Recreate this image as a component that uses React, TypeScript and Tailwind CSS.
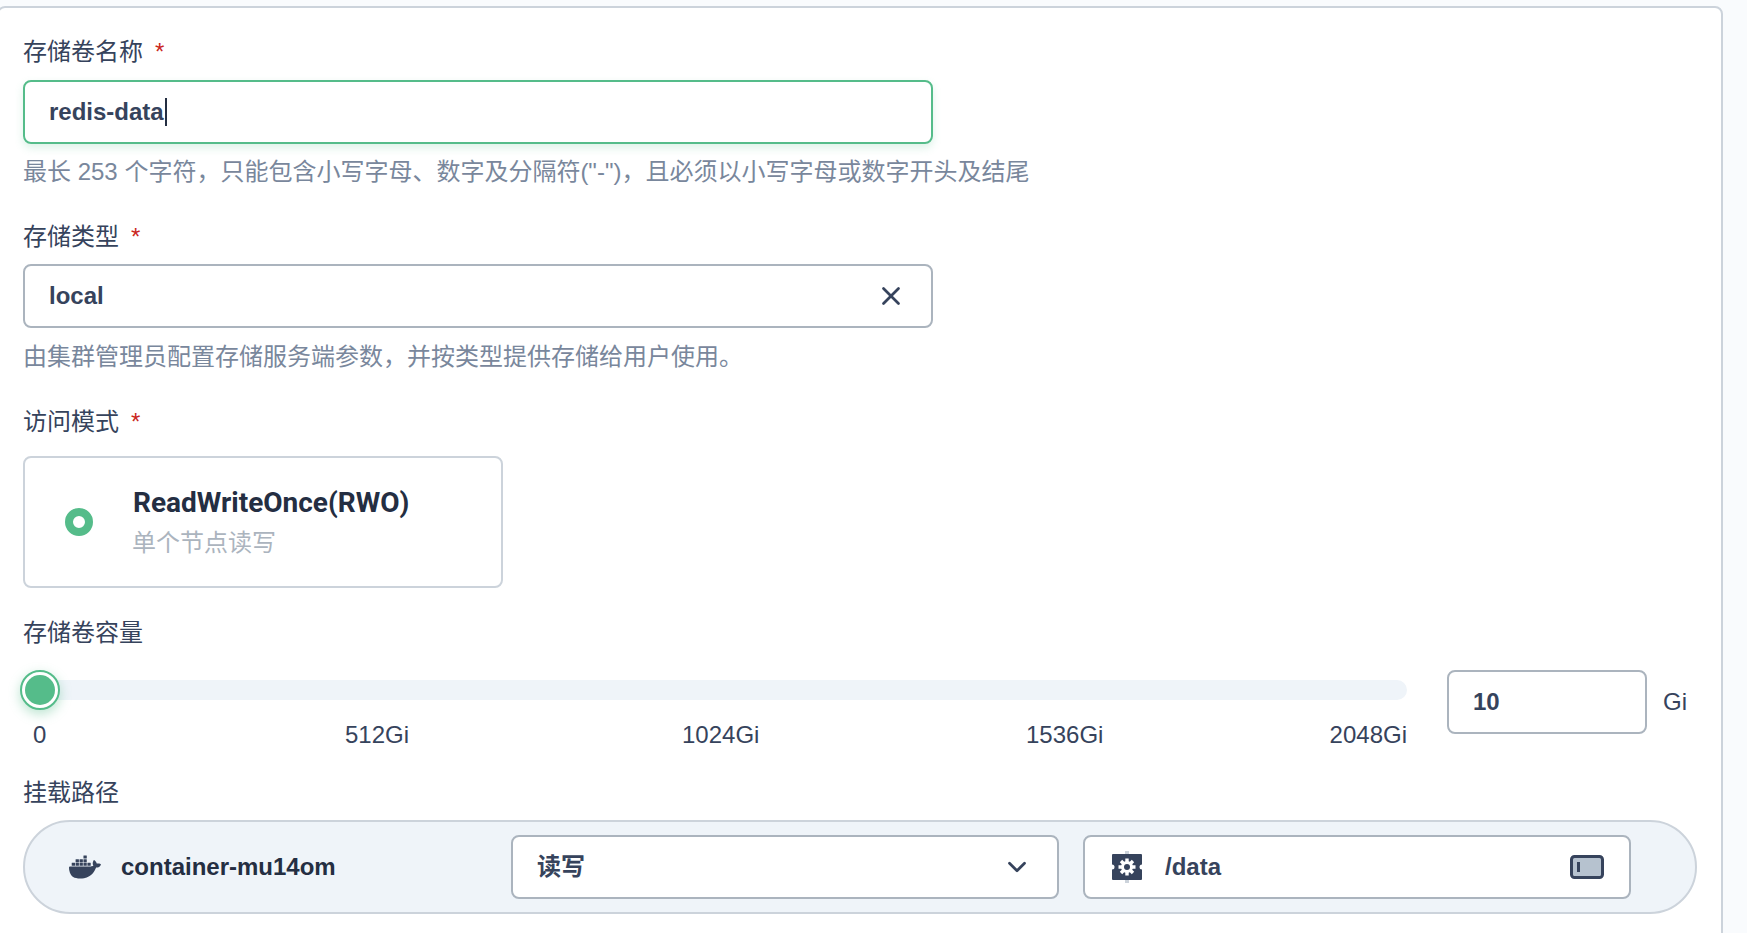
import { ChevronDown, X } from "lucide-react";
import { SiDocker } from "react-icons/si";

function Label({ text, required }: { text: string; required?: boolean }) {
  return (
    <div className="h-8 flex items-center text-2xl leading-8 text-[#36435c]">
      <span>{text}</span>
      {required && <span className="ml-3 text-[#ca2621]">*</span>}
    </div>
  );
}

function GearIcon() {
  return (
    <svg width="30" height="32" viewBox="0 0 30 32" className="shrink-0">
      <rect x="13" y="0" width="4" height="32" fill="#ccd3db" />
      <rect x="0" y="3" width="30" height="26" rx="1" fill="#36435c" />
      <circle cx="0" cy="16" r="2.5" fill="#ffffff" />
      <circle cx="30" cy="16" r="2.5" fill="#ffffff" />
      <g stroke="#ffffff" strokeWidth="3.4">
        <path d="M15 7.5v17M6.5 16h17M9 10l12 12M21 10 9 22" />
      </g>
      <circle cx="15" cy="16" r="6" fill="#ffffff" />
      <circle cx="15" cy="16" r="3" fill="#36435c" />
    </svg>
  );
}

function ToggleIcon() {
  return (
    <svg width="34" height="24" viewBox="0 0 34 24" className="shrink-0">
      <rect x="1.5" y="1.5" width="31" height="21" rx="3" fill="#b6c2cf" stroke="#36435c" strokeWidth="3" />
      <rect x="7" y="7" width="3" height="10" fill="#36435c" />
    </svg>
  );
}

export default function App() {
  return (
    <div className="h-[933px] w-full overflow-hidden bg-[#f9fbfd] pt-1.5 font-[Liberation_Sans,Noto_Sans_CJK_SC,sans-serif]">
      <div className="-ml-[3px] h-[940px] w-[1726px] rounded-lg border-2 border-[#ccd3db] bg-white pl-6 pr-6 pt-7">
        <Label text="存储卷名称" required />
        <div className="mt-3 flex h-16 w-[910px] items-center rounded-lg border-2 border-[#55bc8a] px-6 text-2xl font-bold text-[#36435c] shadow-[0_4px_8px_rgba(85,188,138,0.2)]">
          redis-data
          <span className="ml-px h-7 w-0.5 bg-[#242e42]" />
        </div>
        <div className="mt-3 h-8 text-2xl leading-8 text-[#79879c]">
          {'最长 253 个字符，只能包含小写字母、数字及分隔符("-")，且必须以小写字母或数字开头及结尾'}
        </div>

        <div className="mt-[33px]">
          <Label text="存储类型" required />
        </div>
        <div className="mt-[11px] flex h-16 w-[910px] items-center justify-between rounded-lg border-2 border-[#abb4be] pl-6 pr-[25px] text-2xl font-bold text-[#36435c]">
          local
          <X size={30} strokeWidth={2.2} className="text-[#36435c]" />
        </div>
        <div className="mt-[13px] h-8 text-2xl leading-8 text-[#79879c]">
          由集群管理员配置存储服务端参数，并按类型提供存储给用户使用。
        </div>

        <div className="mt-[33px]">
          <Label text="访问模式" required />
        </div>
        <div className="mt-[18px] flex h-[132px] w-[480px] items-center rounded-lg border-2 border-[#ccd3db] pl-[40px]">
          <span className="size-7 shrink-0 rounded-full border-[8px] border-[#55bc8a] bg-white" />
          <div className="ml-10">
            <div className="font-[Roboto,sans-serif] text-[28px] leading-9 font-bold text-[#242e42] -mt-px">
              ReadWriteOnce(RWO)
            </div>
            <div className="mt-[6px] -ml-px text-2xl leading-8 text-[#abb4be]">单个节点读写</div>
          </div>
        </div>

        <div className="mt-[29px]">
          <Label text="存储卷容量" />
        </div>
        <div className="mt-[21px] flex items-start">
          <div className="w-[1384px]">
            <div className="relative mt-2.5 h-5 rounded-full bg-[#eff4f9]">
              <span className="absolute -left-[3px] -top-2.5 flex size-10 items-center justify-center rounded-full border-2 border-[#55bc8a] bg-white shadow-[0_4px_12px_rgba(85,188,138,0.4)]">
                <span className="size-[30px] rounded-full bg-[#55bc8a]" />
              </span>
            </div>
            <div className="mt-[19px] grid grid-cols-[312px_337px_344px_1fr_auto] pl-2.5 text-2xl leading-8 text-[#36435c]">
              <span>0</span>
              <span>512Gi</span>
              <span>1024Gi</span>
              <span>1536Gi</span>
              <span>2048Gi</span>
            </div>
          </div>
          <div className="ml-10 flex h-16 w-[200px] items-center rounded-lg border-2 border-[#abb4be] px-6 text-2xl font-bold text-[#36435c]">
            10
          </div>
          <div className="ml-4 flex h-16 items-center text-2xl text-[#36435c]">Gi</div>
        </div>

        <div className="mt-[26px]">
          <Label text="挂载路径" />
        </div>
        <div className="mt-[11px] flex h-[94px] w-[1674px] items-center rounded-full border-2 border-[#ccd3db] bg-[#eff4f9] pl-11">
          <SiDocker size={32} className="shrink-0 text-[#36435c]" />
          <span className="ml-5 w-[390px] text-2xl font-bold text-[#242e42]">container-mu14om</span>
          <div className="flex h-16 w-[548px] items-center justify-between rounded-lg border-2 border-[#abb4be] bg-white pl-6 pr-[25px] text-2xl font-bold text-[#36435c]">
            读写
            <ChevronDown size={30} strokeWidth={2.2} className="text-[#36435c]" />
          </div>
          <div className="ml-6 flex h-16 w-[548px] items-center rounded-lg border-2 border-[#abb4be] bg-white pl-[27px] pr-[25px] text-2xl font-bold text-[#36435c]">
            <GearIcon />
            <span className="ml-[23px] flex-1">/data</span>
            <ToggleIcon />
          </div>
        </div>
      </div>
    </div>
  );
}
